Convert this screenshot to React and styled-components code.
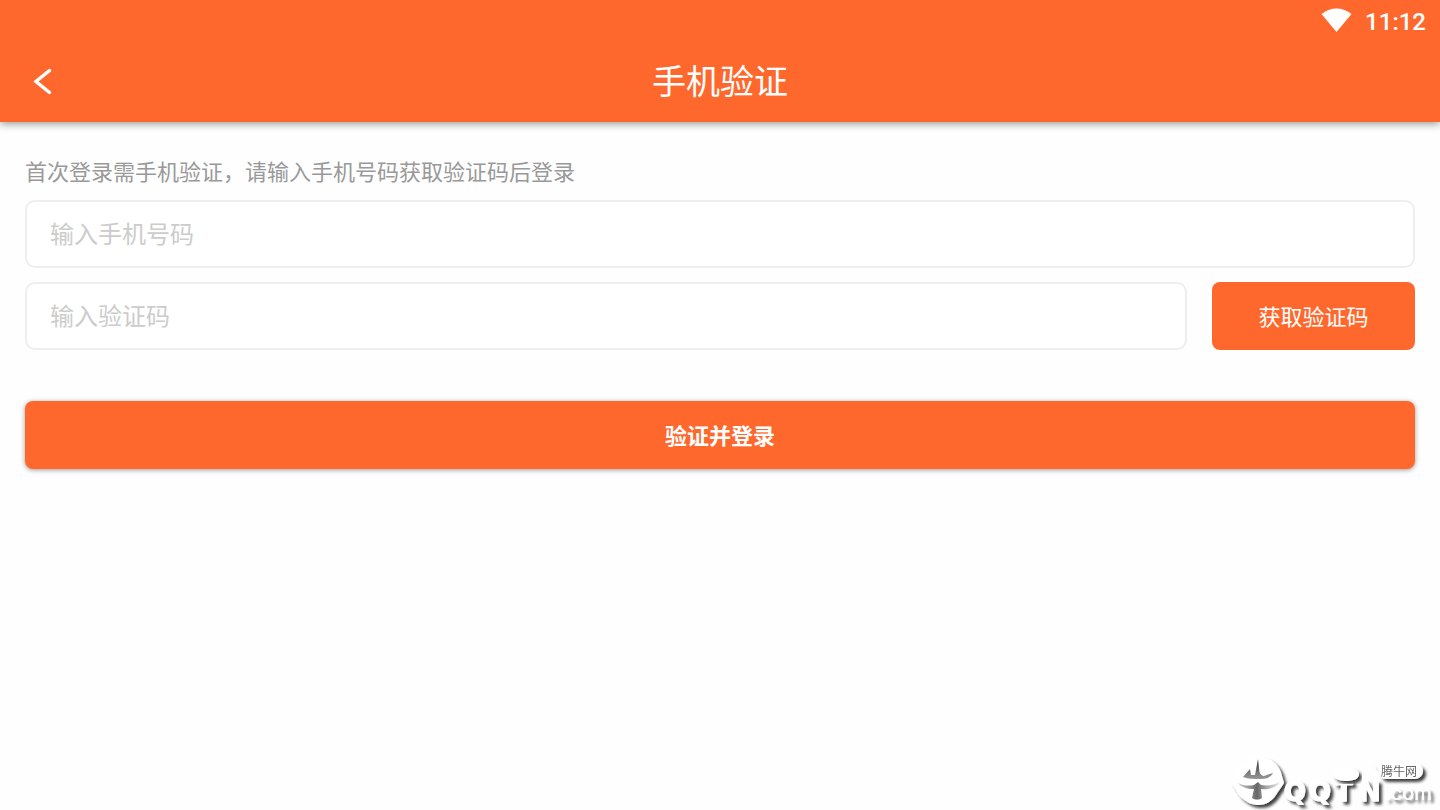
import React from 'react';
import styled, { ThemeProvider, createGlobalStyle } from 'styled-components';

const theme = {
  primary: '#ff682d',
  white: '#ffffff',
  border: '#eeeeee',
  textMuted: '#999999',
  placeholder: '#cccccc',
  fontSize: {
    s: '22px',
    m: '24px',
    l: '34px',
  },
};

const GlobalStyle = createGlobalStyle`
  *, *::before, *::after {
    box-sizing: border-box;
  }

  body {
    margin: 0;
    background: #fefefe;
    font-family: Roboto, 'Noto Sans CJK SC', sans-serif;
  }

  button, input {
    font-family: inherit;
  }
`;

const StyledHeader = styled.header`
  background: ${({ theme }) => theme.primary};
  color: ${({ theme }) => theme.white};
  box-shadow: 0 2px 8px rgba(0, 0, 0, 0.4);
`;

const StyledStatusBar = styled.div`
  display: flex;
  justify-content: flex-end;
  align-items: center;
  gap: 13px;
  height: 42px;
  padding: 2px 14px 0;
  font-size: ${({ theme }) => theme.fontSize.m};
  font-weight: 500;
`;

const StyledWifiIcon = styled.svg`
  width: 31px;
  height: 24px;
  margin-bottom: 4px;
`;

const StyledTitleBar = styled.div`
  display: grid;
  grid-template-columns: 60px 1fr 60px;
  align-items: center;
  height: 80px;
  padding: 0 12px;
`;

const StyledBackButton = styled.button`
  display: flex;
  align-items: center;
  justify-content: center;
  width: 60px;
  height: 60px;
  padding: 0;
  border: none;
  background: none;
  color: inherit;
  cursor: pointer;
`;

const StyledTitle = styled.h1`
  margin: 0;
  font-size: ${({ theme }) => theme.fontSize.l};
  font-weight: 400;
  line-height: 48px;
  text-align: center;
`;

const StyledForm = styled.form`
  display: flex;
  flex-direction: column;
  gap: 14px;
  padding: 38px 25px;
`;

const StyledHint = styled.p`
  margin: 0;
  color: ${({ theme }) => theme.textMuted};
  font-size: ${({ theme }) => theme.fontSize.s};
  line-height: 26px;
`;

const StyledRow = styled.div`
  display: flex;
  gap: 25px;
`;

const StyledInput = styled.input`
  flex: 1;
  min-width: 0;
  height: 68px;
  padding: 2px 23px 0;
  border: 2px solid ${({ theme }) => theme.border};
  border-radius: 10px;
  background: ${({ theme }) => theme.white};
  font-size: ${({ theme }) => theme.fontSize.m};
  outline: none;

  &::placeholder {
    color: ${({ theme }) => theme.placeholder};
    opacity: 1;
  }
`;

const StyledButton = styled.button`
  min-width: 203px;
  height: 68px;
  padding: 0 24px 2px;
  border: none;
  border-radius: 8px;
  background: ${({ theme }) => theme.primary};
  color: ${({ theme }) => theme.white};
  font-size: ${({ theme }) => theme.fontSize.s};
  cursor: pointer;
`;

const StyledSubmitButton = styled(StyledButton)`
  margin-top: 37px;
  font-weight: 700;
  box-shadow: 0 1px 5px rgba(0, 0, 0, 0.4);
`;

const StyledWatermark = styled.svg`
  position: fixed;
  right: 0;
  bottom: 0;
  width: 220px;
  height: 65px;
  pointer-events: none;
`;

const Watermark = () => (
  <StyledWatermark viewBox="0 0 220 65" role="img" aria-label="腾牛网 QQTN.com">
    <defs>
      <filter id="shade" x="-10%" y="-10%" width="120%" height="130%">
        <feDropShadow dx="3" dy="3" stdDeviation="1.8" floodColor="#000" floodOpacity="0.75" />
      </filter>
      <filter id="soften">
        <feGaussianBlur stdDeviation="0.6" />
      </filter>
      <linearGradient id="slot" x1="0" y1="0" x2="0" y2="1">
        <stop offset="0" stopColor="#333" />
        <stop offset="1" stopColor="#999" />
      </linearGradient>
      <linearGradient id="crescent" x1="0" y1="0" x2="1" y2="0">
        <stop offset="0" stopColor="#888" stopOpacity="0.4" />
        <stop offset="0.45" stopColor="#666" />
        <stop offset="1" stopColor="#bbb" stopOpacity="0.4" />
      </linearGradient>
    </defs>
    <g fill="#fff" filter="url(#shade)">
      <path d="M38 12C51 12 60 20 62 31L64 38C61 43 58 46 56 50C51 57 45 60 38 60C31 60 24 56 19 50L11 37L16 36C16 22 26 12 38 12Z" />
      <path d="M154 19H195C200 19 203 22 203 26C203 31 199 34 194 34H166C161 34 160 31 159 27C158 23 157 21 154 19Z" />
      <text
        x="64 89 115 139"
        y="56"
        fontFamily="'DejaVu Sans', sans-serif"
        fontSize="26"
        fontWeight="700"
        stroke="#fff"
        strokeWidth="1"
        strokeLinejoin="round"
      >
        QQTN
      </text>
      <text x="165" y="55" fontFamily="Inter, sans-serif" fontSize="20">.com</text>
    </g>
    <path d="M113 29C113 26 118 24 122 24C129 21 139 24 139 29C139 34 133 36 126 36C118 36 113 33 113 29Z" fill="#fff" filter="url(#shade)" />
    <g filter="url(#soften)">
      <path d="M38 14L39.500 27C40 29 42 31 44 31L53 28C50 33 46 34 40 34L34 34C30 34 26 33 23 32L30 24L31 30L35 30Z" fill="url(#slot)" />
      <path d="M18 38C24 41 29 41 34 40L38 37L41 40C48 41 54 40 60 37C56 43 48 45 41 44L42 53C39 55 35 55 32 53L34 44C27 44 21 42 18 38Z" fill="url(#crescent)" />
    </g>
    <text x="161" y="31" fill="#666" fontFamily="Noto Sans CJK SC, sans-serif" fontSize="12">腾牛网</text>
  </StyledWatermark>
);

const App = () => (
  <ThemeProvider theme={theme}>
    <GlobalStyle />
    <StyledHeader>
      <StyledStatusBar>
        <StyledWifiIcon viewBox="0 0 31 24" aria-hidden="true">
          <path d="M0.500 6C9 -1.500 22 -1.500 30.500 6L15.500 24Z" fill="currentColor" />
        </StyledWifiIcon>
        <time>11:12</time>
      </StyledStatusBar>
      <StyledTitleBar>
        <StyledBackButton type="button" aria-label="返回">
          <svg width="20" height="28" viewBox="0 0 20 28" fill="none">
            <path d="M17.500 2.500L4 13.500L17.500 24.500" stroke="currentColor" strokeWidth="3.500" strokeLinecap="round" />
          </svg>
        </StyledBackButton>
        <StyledTitle>手机验证</StyledTitle>
      </StyledTitleBar>
    </StyledHeader>
    <StyledForm onSubmit={(e) => e.preventDefault()}>
      <StyledHint>首次登录需手机验证，请输入手机号码获取验证码后登录</StyledHint>
      <StyledRow>
        <StyledInput type="tel" placeholder="输入手机号码" aria-label="输入手机号码" />
      </StyledRow>
      <StyledRow>
        <StyledInput type="text" placeholder="输入验证码" aria-label="输入验证码" />
        <StyledButton type="button">获取验证码</StyledButton>
      </StyledRow>
      <StyledSubmitButton type="submit">验证并登录</StyledSubmitButton>
    </StyledForm>
    <Watermark />
  </ThemeProvider>
);

export default App;
